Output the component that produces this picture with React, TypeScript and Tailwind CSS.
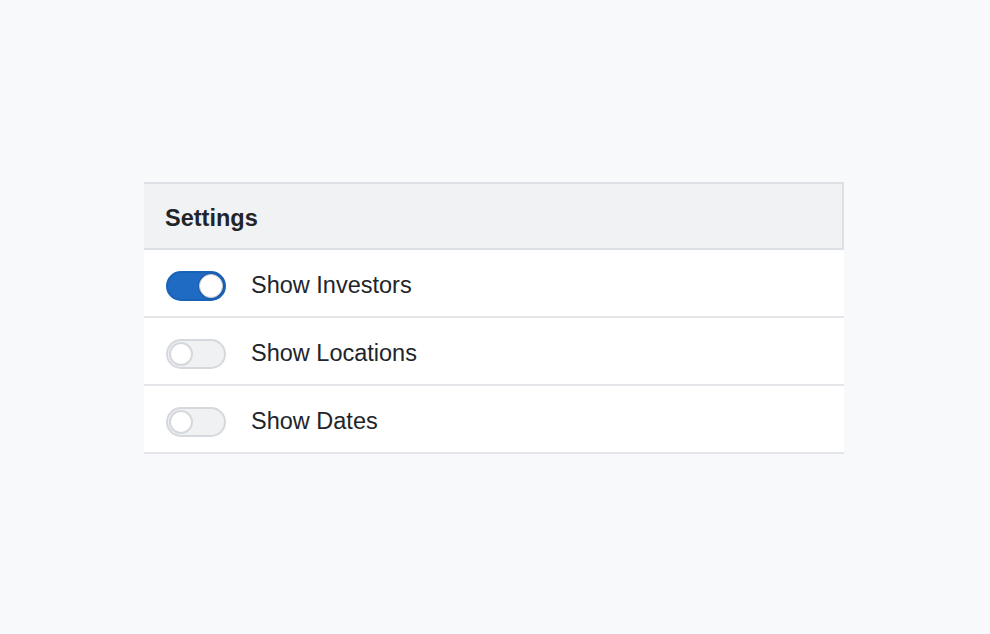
import React, { useState } from "react";

function Toggle({ on, onClick }: { on: boolean; onClick: () => void }) {
  return (
    <button
      onClick={onClick}
      className={
        on
          ? "relative w-[60px] h-[30px] rounded-full bg-[#1f6bc4] border-2 border-[#1a62b8] shrink-0"
          : "relative w-[60px] h-[30px] rounded-full bg-[#f0f1f3] border-2 border-[#d5d8dd] shrink-0"
      }
    >
      <span
        className={
          on
            ? "absolute top-[1px] right-[1px] w-[24px] h-[24px] rounded-full bg-white border border-[#c8ccd2] shadow-[0_0_1px_1px_rgba(0,0,0,0.15)]"
            : "absolute top-[1px] left-[1px] w-[24px] h-[24px] rounded-full bg-white border-2 border-[#d5d8dd]"
        }
      />
    </button>
  );
}

export default function App() {
  const [s, setS] = useState([true, false, false]);
  const labels = ["Show Investors", "Show Locations", "Show Dates"];
  return (
    <div
      className="w-[990px] h-[634px] bg-[#f8f9fa] pt-[182px] pl-[144px]"
      style={{ fontFamily: '"Liberation Sans", Arial, sans-serif' }}
    >
      <div className="w-[700px]">
        <div className="h-[68px] bg-[#f1f2f4] border-t-2 border-r-2 border-b-2 border-[#dcdfe3] flex items-center pl-[21px] pt-[5px]">
          <span className="text-[23.5px] font-bold text-[#212529] leading-none">Settings</span>
        </div>
        {labels.map((l, i) => (
          <div
            key={l}
            className="h-[68px] bg-white border-b-2 border-[#e3e5e8] flex items-center pl-[22px] pt-[5px]"
          >
            <Toggle
              on={s[i]}
              onClick={() => setS(s.map((v, j) => (j === i ? !v : v)))}
            />
            <span className="ml-[25px] text-[23.5px] text-[#212529] leading-none">{l}</span>
          </div>
        ))}
      </div>
    </div>
  );
}
